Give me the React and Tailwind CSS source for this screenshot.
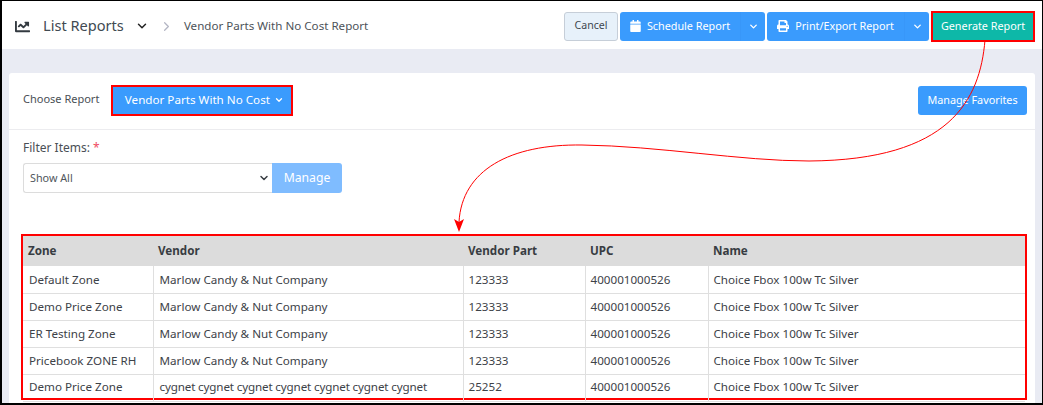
import React from "react";
import { ChevronDown, ChevronRight } from "lucide-react";
import { FaCalendar, FaPrint, FaChartLine } from "react-icons/fa";

const rows = [
  ["Default Zone", "Marlow Candy & Nut Company", "123333", "400001000526", "Choice Fbox 100w Tc Silver"],
  ["Demo Price Zone", "Marlow Candy & Nut Company", "123333", "400001000526", "Choice Fbox 100w Tc Silver"],
  ["ER Testing Zone", "Marlow Candy & Nut Company", "123333", "400001000526", "Choice Fbox 100w Tc Silver"],
  ["Pricebook ZONE RH", "Marlow Candy & Nut Company", "123333", "400001000526", "Choice Fbox 100w Tc Silver"],
  ["Demo Price Zone", "cygnet cygnet cygnet cygnet cygnet cygnet cygnet", "25252", "400001000526", "Choice Fbox 100w Tc Silver"],
];

function Split({ icon, label, w }) {
  return (
    <div className={`flex h-[29px] rounded-[3px] bg-[#3a9bfd] text-white ${w}`}>
      <span className="flex flex-1 items-center justify-center gap-[6px] text-[10.8px]">
        {icon}
        {label}
      </span>
      <span className="flex w-[25px] items-center justify-center border-l border-[#3897f9]">
        <ChevronDown size={11} strokeWidth={3} />
      </span>
    </div>
  );
}

export default function App() {
  return (
    <div className="relative h-[405px] w-[1043px] overflow-hidden border-2 border-t-[1px] border-r-[1px] border-black bg-[#e9ebf3] font-['Noto_Sans','Open_Sans',sans-serif] text-[#3a3f45]">
      <header className="flex h-[48px] items-center bg-white pl-[13px] pr-[7px] pt-[2px]">
        <FaChartLine className="h-[15px] w-[15px] text-[#333a40]" />
        <span className="ml-[13px] text-[14.6px] text-[#414a52]">List Reports</span>
        <ChevronDown className="ml-[11px] text-[#222]" size={14} strokeWidth={2.5} />
        <ChevronRight className="ml-[10px] text-[#b4b6c4]" size={15} strokeWidth={2} />
        <span className="ml-[10px] text-[11.6px] text-[#4d5359]">Vendor Parts With No Cost Report</span>
        <div className="ml-auto flex items-center gap-[2px]">
          <button className="h-[29px] w-[54px] rounded-[3px] border border-[#c6ced8] bg-[#e7f1fa] text-[10.6px] text-[#3f4850]">Cancel</button>
          <Split w="w-[145px]" label="Schedule Report" icon={<FaCalendar className="h-[12px] w-[11px]" />} />
          <Split w="w-[162px]" label="Print/Export Report" icon={<FaPrint className="h-[12px] w-[12px]" />} />
          <button className="h-[31px] w-[104px] border-2 border-[#f00] bg-[#0db8a8] text-[10.8px] text-white">Generate Report</button>
        </div>
      </header>

      <main className="px-[7px] pt-[24px]">
        <section className="h-[340px] rounded-t-[3px] bg-white">
          <div className="flex h-[57px] items-center border-b border-[#ececef] pb-[2px] pl-[14px] pr-[8px]">
            <span className="mb-[2px] text-[11px] text-[#4a4f55]">Choose Report</span>
            <button className="ml-[12px] flex h-[31px] w-[182px] items-center justify-center gap-[4px] border-2 border-[#f00] bg-[#3a9bfd] pl-[4px] text-[11.65px] text-white">
              Vendor Parts With No Cost
              <ChevronDown size={10} strokeWidth={3} />
            </button>
            <button className="ml-auto h-[29px] w-[109px] rounded-[3px] bg-[#3a9bfd] text-[10.8px] text-white">Manage Favorites</button>
          </div>

          <div className="pl-[14px] pr-[7px] pt-[10px]">
            <div className="text-[12px] leading-[16px] text-[#4a4f55]">
              Filter Items: <span className="text-[#ef4a5f]">*</span>
            </div>
            <div className="mt-[7px] flex h-[30px] w-[319px]">
              <div className="flex flex-1 items-center justify-between rounded-l-[3px] border border-r-0 border-[#dcdcdc] pl-[6px] pr-[2px] text-[10.8px] text-[#50565c]">
                Show All
                <ChevronDown size={12} strokeWidth={3} className="text-[#3a3f45]" />
              </div>
              <div className="flex w-[70px] items-center justify-center rounded-r-[3px] bg-[#7fbcff] text-[12.2px] text-white">Manage</div>
            </div>
            <div className="ml-[-2px] mt-[41px] h-[166px] w-[1006px] border-2 border-[#f00]">
              <table className="w-full table-fixed border-collapse text-[11.65px]">
                <colgroup>
                  <col className="w-[130px]" />
                  <col className="w-[310px]" />
                  <col className="w-[122px]" />
                  <col className="w-[123px]" />
                  <col />
                </colgroup>
                <thead>
                  <tr className="h-[30px] bg-[#dcdcdc] text-left">
                    {["Zone", "Vendor", "Vendor Part", "UPC", "Name"].map((h) => (
                      <th key={h} className="pb-[1px] pl-[5px] font-bold text-[#383c42]">{h}</th>
                    ))}
                  </tr>
                </thead>
                <tbody>
                  {rows.map((r, i) => (
                    <tr key={i} className="h-[27px] border-b border-[#dfdfdf]">
                      {r.map((c, j) => (
                        <td
                          key={j}
                          className={`text-[#3d4248] ${j < 2 ? "pl-[6px]" : "pl-[5px]"} ${i === 4 ? "pb-[1px]" : ""} ${i === 4 && j === 1 ? "tracking-[-0.15px]" : ""} ${j < 4 ? "border-r border-[#dfdfdf]" : ""}`}
                        >
                          {c}
                        </td>
                      ))}
                    </tr>
                  ))}
                </tbody>
              </table>
            </div>
          </div>
        </section>
      </main>

      <svg className="pointer-events-none absolute left-[-2px] top-[-1px]" width="1043" height="405" fill="none">
        <path d="M985 40 C980 100 950 160 809 161 C740 161 660 146 582 145 C510 144 462 170 459 222" stroke="#f00" strokeWidth="1" />
        <path d="M454 219 L459 232 L464 219 L459 222 Z" fill="#f00" />
      </svg>
    </div>
  );
}
